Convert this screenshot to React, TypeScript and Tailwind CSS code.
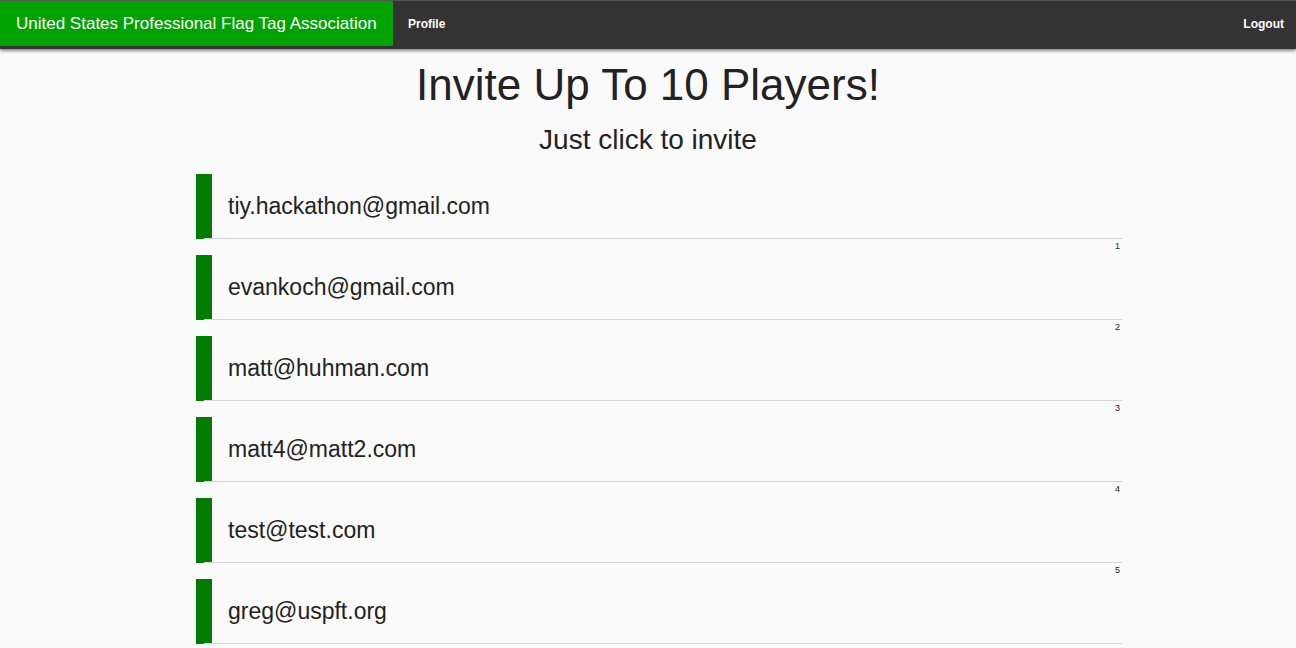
import React from "react";

const emails = [
  "tiy.hackathon@gmail.com",
  "evankoch@gmail.com",
  "matt@huhman.com",
  "matt4@matt2.com",
  "test@test.com",
  "greg@uspft.org",
];

const InviteRow = ({ email, index }: { email: string; index: number }) => {
  return (
    <li className="flex flex-col">
      <div className="flex h-[65px] items-stretch">
        <div className="w-4 shrink-0 bg-[#007c00]" />
        <div className="flex flex-1 flex-col">
          <div className="flex flex-1 items-center pl-4 text-[23px] text-[#222]">
            {email}
          </div>
          <div className="-ml-2 h-px bg-[#d4d4d4]" />
        </div>
      </div>
      <div className="h-4 pr-[2px] pt-[3px] text-right text-[9px] leading-none text-[#222]">
        {index + 1}
      </div>
    </li>
  );
};

const App = () => {
  return (
    <div
      className="min-h-[648px] bg-[#fafafa]"
      style={{ fontFamily: '"Liberation Sans", Arial, sans-serif' }}
    >
      <nav className="flex h-[49px] border-t border-[#555] bg-[#333] shadow-[0_2px_3px_rgba(0,0,0,0.45)]">
        <a className="flex h-[45px] w-[393px] items-center bg-[#00a200] pl-4 text-[17px] text-white">
          United States Professional Flag Tag Association
        </a>
        <a className="flex h-[45px] items-center pl-[15px] text-[12px] font-bold text-white">
          Profile
        </a>
        <div className="flex-1" />
        <a className="flex h-[45px] items-center pr-3 text-[12px] font-bold text-white">
          Logout
        </a>
      </nav>

      <h1 className="mt-[8px] text-center text-[44px] leading-[56px] text-[#222]">
        Invite Up To 10 Players!
      </h1>
      <h2 className="mt-[12px] text-center text-[28px] leading-[30px] text-[#222]">
        Just click to invite
      </h2>
      <ul className="ml-[196px] mt-[19px] w-[926px]">
        {emails.map((email, i) => (
          <InviteRow key={email} email={email} index={i} />
        ))}
      </ul>
    </div>
  );
};

export default App;
